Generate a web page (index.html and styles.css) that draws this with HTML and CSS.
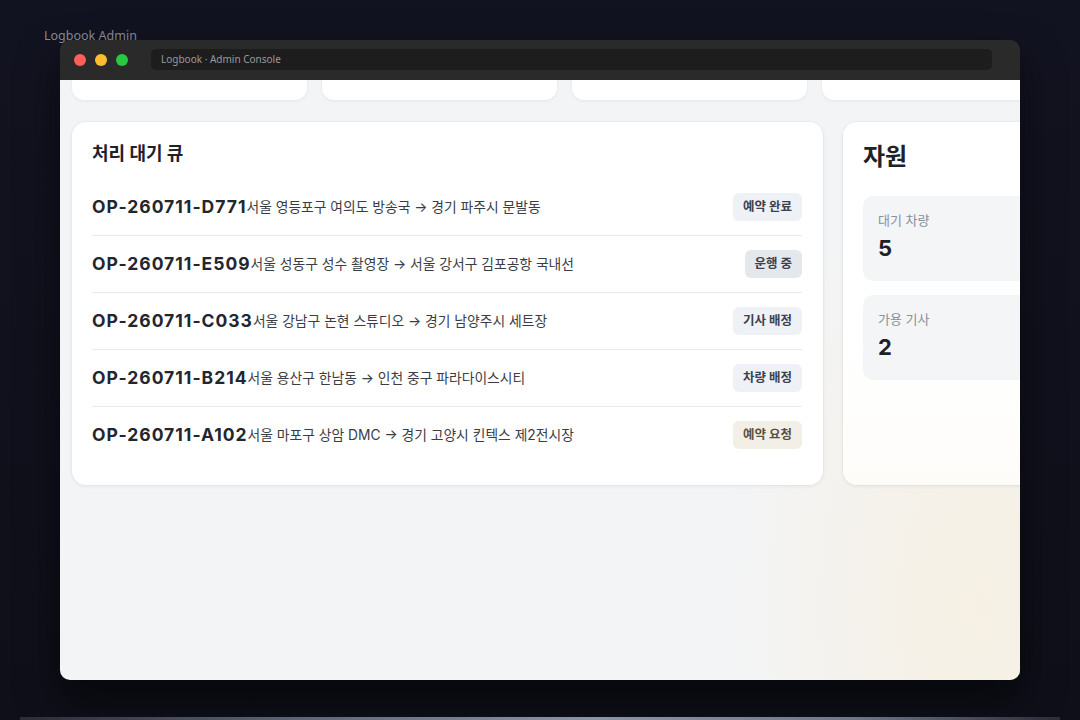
FILE: index.html
```html
<!DOCTYPE html>
<html lang="ko">
<head>
<meta charset="utf-8">
<title>Logbook Admin</title>
<link rel="stylesheet" href="styles.css">
</head>
<body>
<div class="desk">
  <div class="app-label">Logbook Admin</div>
  <div class="window">
    <div class="titlebar">
      <div class="lights">
        <span class="light red"></span>
        <span class="light yellow"></span>
        <span class="light green"></span>
      </div>
      <div class="address">Logbook · Admin Console</div>
    </div>
    <div class="viewport">
      <div class="page">
        <div class="stat-row">
          <div class="top-card"></div>
          <div class="top-card"></div>
          <div class="top-card"></div>
          <div class="top-card"></div>
        </div>
        <div class="main-row">
          <section class="card queue">
            <h2 class="queue-title">처리 대기 큐</h2>
            <ul class="queue-list">
              <li class="queue-item">
                <span class="op-id">OP-260711-D771</span>
                <span class="route">서울 영등포구 여의도 방송국 → 경기 파주시 문발동</span>
                <span class="badge">예약 완료</span>
              </li>
              <li class="queue-item">
                <span class="op-id">OP-260711-E509</span>
                <span class="route">서울 성동구 성수 촬영장 → 서울 강서구 김포공항 국내선</span>
                <span class="badge badge-running">운행 중</span>
              </li>
              <li class="queue-item">
                <span class="op-id">OP-260711-C033</span>
                <span class="route">서울 강남구 논현 스튜디오 → 경기 남양주시 세트장</span>
                <span class="badge">기사 배정</span>
              </li>
              <li class="queue-item">
                <span class="op-id">OP-260711-B214</span>
                <span class="route">서울 용산구 한남동 → 인천 중구 파라다이스시티</span>
                <span class="badge">차량 배정</span>
              </li>
              <li class="queue-item">
                <span class="op-id">OP-260711-A102</span>
                <span class="route">서울 마포구 상암 DMC → 경기 고양시 킨텍스 제2전시장</span>
                <span class="badge badge-request">예약 요청</span>
              </li>
            </ul>
          </section>
          <section class="card resources">
            <h2 class="res-title">자원</h2>
            <div class="res-box">
              <div class="res-label">대기 차량</div>
              <div class="res-value">5</div>
            </div>
            <div class="res-box">
              <div class="res-label">가용 기사</div>
              <div class="res-value">2</div>
            </div>
          </section>
        </div>
      </div>
    </div>
  </div>
  <div class="dock-edge"></div>
</div>
</body>
</html>
```
FILE: styles.css
```css
* { box-sizing: border-box; }
html, body {
  margin: 0;
  padding: 0;
  height: 720px;
  overflow: hidden;
}
body {
  background: #12131e;
  font-family: Inter, "Noto Sans CJK KR", sans-serif;
  color: #23262e;
}
.desk {
  height: 720px;
  display: flex;
  flex-direction: column;
  background: linear-gradient(180deg, #121320 0%, #0e0f18 100%);
}
.app-label {
  font-family: "Noto Sans", "Open Sans", sans-serif;
  font-size: 12.5px;
  line-height: 12px;
  color: #8a8d99;
  padding: 30px 0 0 44px;
  height: 40px;
}
.window {
  margin-left: 60px;
  width: 960px;
  height: 640px;
  border-radius: 10px;
  overflow: hidden;
  background: #2a2a2a;
  display: flex;
  flex-direction: column;
  box-shadow: 0 20px 40px rgba(0, 0, 0, 0.55);
}
.titlebar {
  height: 40px;
  flex: 0 0 40px;
  display: flex;
  align-items: center;
  padding: 0 28px 0 14px;
  background: #2a2a2a;
}
.lights {
  display: flex;
  gap: 9px;
}
.light {
  width: 12px;
  height: 12px;
  border-radius: 50%;
  display: block;
}
.red { background: #fe5f57; }
.yellow { background: #febc2e; }
.green { background: #28c840; }
.address {
  margin-left: 23px;
  flex: 1;
  height: 21px;
  margin-top: -1px;
  border-radius: 5px;
  background: #1d1d1d;
  color: #9a9a9a;
  font-family: "Noto Sans", "Open Sans", sans-serif;
  font-size: 10px;
  line-height: 21px;
  padding-left: 10px;
}
.viewport {
  flex: 1;
  overflow: hidden;
  background:
    radial-gradient(ellipse 260px 460px at 96% 88%, rgba(246, 240, 226, 0.95), rgba(246, 240, 226, 0) 100%),
    #f3f4f6;
}
.page {
  padding-left: 12px;
  width: 1100px;
}
.stat-row {
  display: flex;
  gap: 15px;
  margin-top: -80px;
}
.top-card {
  width: 235px;
  height: 100px;
  background: #ffffff;
  border-radius: 12px;
  box-shadow: 0 1px 3px rgba(20, 24, 40, 0.07);
}
.main-row {
  display: flex;
  gap: 20px;
  margin-top: 22px;
  align-items: flex-start;
}
.card {
  background: #ffffff;
  border-radius: 14px;
  box-shadow: 0 1px 4px rgba(20, 24, 40, 0.07), 0 0 0 1px rgba(20, 24, 40, 0.025);
}
.queue {
  width: 751px;
  height: 363px;
  padding: 20px 21px 21px 20px;
}
.queue-title {
  margin: 0;
  font-size: 18px;
  line-height: 24px;
  font-weight: 700;
  color: #1f2128;
}
.queue-list {
  list-style: none;
  margin: 13px 0 0;
  padding: 0;
}
.queue-item {
  display: flex;
  align-items: center;
  padding: 14px 0;
  border-bottom: 1px solid #e9eaed;
}
.queue-item:last-child {
  border-bottom: none;
}
.op-id {
  font-size: 17.5px;
  font-weight: 700;
  letter-spacing: 1px;
  line-height: 28px;
  color: #23262e;
}
.route {
  font-size: 13.8px;
  line-height: 28px;
  color: #3a3d45;
}
.badge {
  margin-left: auto;
  height: 28px;
  line-height: 28px;
  padding: 0 10px;
  border-radius: 6px;
  font-size: 12.5px;
  font-weight: 700;
  background: #eef1f5;
  color: #3b414e;
}
.badge-running {
  background: #e4e7eb;
}
.badge-request {
  background: #f2efe7;
  color: #5b5140;
}
.resources {
  width: 236px;
  height: 363px;
  padding: 20px 0 0 20px;
  background: linear-gradient(180deg, #ffffff 60%, #fdfcf9 100%);
}
.res-title {
  margin: 0;
  font-size: 24px;
  line-height: 30px;
  font-weight: 700;
  color: #1f2128;
}
.res-box {
  margin-top: 14px;
  height: 85px;
  border-radius: 10px;
  background: #f3f5f7;
  padding: 15px 15px 0;
}
.res-title + .res-box {
  margin-top: 24px;
}
.res-label {
  font-size: 13px;
  line-height: 18px;
  color: #8a8f99;
}
.res-value {
  margin-top: 6px;
  font-size: 22px;
  line-height: 26px;
  font-weight: 700;
  color: #1f2128;
}
.dock-edge {
  margin-top: auto;
  height: 3px;
  margin-left: 20px;
  margin-right: 20px;
  background: linear-gradient(90deg, #2a2d38 0%, #5b6170 25%, #8c95a6 55%, #6f7686 80%, #2a2d38 100%);
}
```
